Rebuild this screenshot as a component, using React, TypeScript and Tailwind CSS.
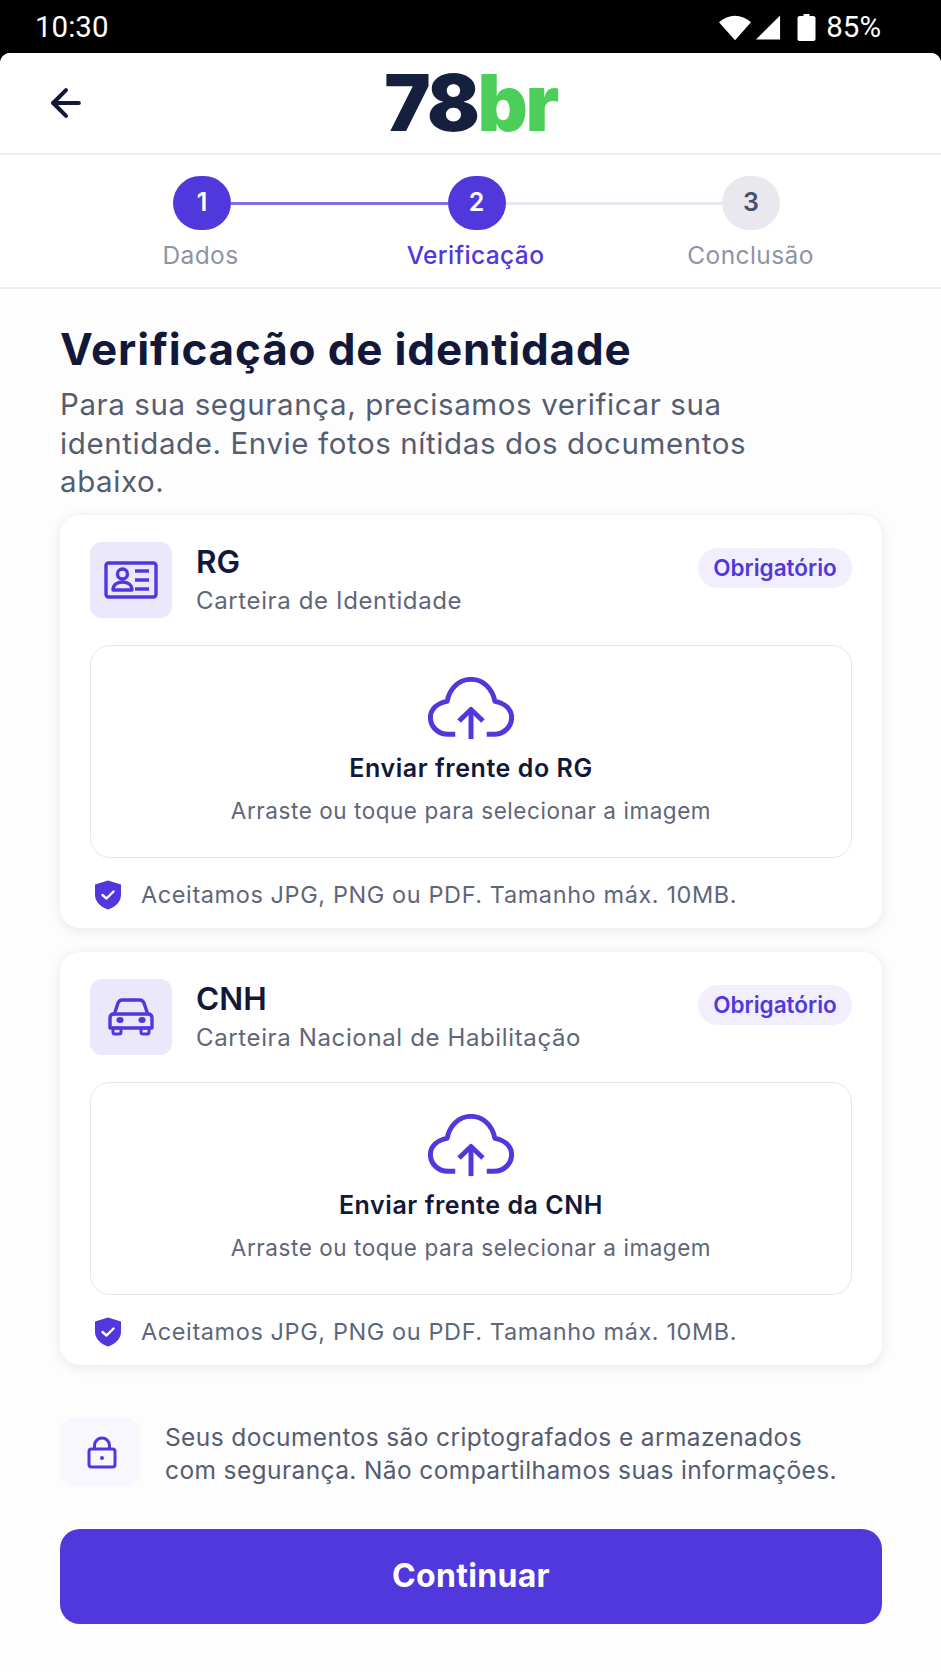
import React from 'react';
import { ArrowLeft } from 'lucide-react';

const CloudIcon = () => (
  <svg width="86" height="64" viewBox="0 0 90 67" fill="none" stroke="#5138dc" strokeWidth="5.2" strokeLinejoin="round">
    <path d="M28.5 60H21C10.5 60 2.5 52 2.5 42.5C2.5 33.5 10 27 20 25.5C22.5 12 32.5 2.5 45 2.5C57.5 2.5 67.5 12 70 25.5C80 27 87.5 33.5 87.5 42.5C87.5 52 79.5 60 69 60H61.5" />
    <path d="M45 65V35" />
    <path d="M32.5 46L45 34L57.5 46" />
  </svg>
);

const IdIcon = () => (
  <svg width="54" height="38" viewBox="0 0 54 38" fill="none" stroke="#5138dc" strokeWidth="3.4" strokeLinejoin="round">
    <rect x="2" y="2" width="50" height="34" rx="2.5" />
    <circle cx="18.5" cy="13" r="5" />
    <path d="M9 29C9 24 13 21 18.5 21C24 21 28 24 28 29Z" />
    <path d="M31 10H45M31 19H45M31 28H45" />
  </svg>
);

const CarIcon = () => (
  <svg width="46" height="38" viewBox="0 0 46 38" fill="none">
    <path d="M6 17L10 5C11 3 12 2 14 2H32C34 2 35 3 36 5L40 17" stroke="#5138dc" strokeWidth="3.4" strokeLinejoin="round" />
    <path d="M2 20C2 17 4 16 6 16H40C42 16 44 17 44 20V30H2Z" stroke="#5138dc" strokeWidth="3.4" strokeLinejoin="round" />
    <ellipse cx="12" cy="22" rx="3.6" ry="2.9" fill="#5138dc" />
    <ellipse cx="34" cy="22" rx="3.6" ry="2.9" fill="#5138dc" />
    <path d="M5 30H13V34C13 35.5 12 36 11 36H7C6 36 5 35.5 5 34ZM33 30H41V34C41 35.5 40 36 39 36H35C34 36 33 35.5 33 34Z" stroke="#5138dc" strokeWidth="3" strokeLinejoin="round" />
  </svg>
);

const ShieldIcon = () => (
  <svg width="28" height="30" viewBox="0 0 28 30">
    <path d="M14 0.5L27 4.5V15C27 22 21 27 14 29.5C7 27 1 22 1 15V4.5Z" fill="#5138dc" />
    <path d="M8.5 15L12.5 18.5L19.5 11.5" fill="none" stroke="#fff" strokeWidth="2.4" strokeLinecap="round" strokeLinejoin="round" />
  </svg>
);

const LockIcon = () => (
  <svg width="30" height="33" viewBox="0 0 30 33" fill="none" stroke="#5138dc" strokeWidth="3" strokeLinejoin="round" className="ml-[4px]">
    <rect x="2" y="13" width="26" height="18" rx="2.5" />
    <path d="M7.5 13V9.5C7.5 5 11 2 15 2C19 2 22.5 5 22.5 9.5V13" />
    <circle cx="15" cy="22" r="2" fill="#5138dc" stroke="none" />
  </svg>
);

type DocCardProps = {
  icon: React.ReactNode;
  title: string;
  subtitle: string;
  upload: string;
};

const DocCard = ({ icon, title, subtitle, upload }: DocCardProps) => (
  <div className="bg-white rounded-[20px] h-[413px] px-[30px] pt-[27px] shadow-[0_2px_12px_rgba(30,30,70,0.10)]">
    {/* header */}
    <div className="flex h-[76px]">
      <div className="w-[82px] h-[76px] rounded-[12px] bg-[#ebe8fb] flex items-center justify-center shrink-0">{icon}</div>
      <div className="ml-[24px] flex-1 flex flex-col">
        <p className="mt-[1px] text-[31.5px] leading-[38px] font-semibold text-[#11183a]">{title}</p>
        <p className="mt-[2px] text-[24px] leading-[36px] tracking-[0.63px] text-[#5f6679]">{subtitle}</p>
      </div>
      <div className="mt-[6px] h-[40px] w-[154px] rounded-full bg-[#f1eefd] text-[#5138dc] text-[22.5px] font-semibold flex items-center justify-center">
        Obrigatório
      </div>
    </div>
    {/* upload */}
    <div className="mt-[27px] h-[213px] rounded-[20px] border-[1.5px] border-[#e6e6ef] flex flex-col items-center pt-[31px]">
      <CloudIcon />
      <p className="mt-[11px] text-[25px] leading-[32px] tracking-[0.56px] font-semibold text-[#11183a]">{upload}</p>
      <p className="mt-[11px] text-[22.5px] leading-[32px] tracking-[0.55px] text-[#5f6679]">Arraste ou toque para selecionar a imagem</p>
    </div>
    {/* note */}
    <div className="mt-[21px] ml-[4px] flex items-center gap-[19px]">
      <ShieldIcon />
      <p className="text-[23.5px] leading-[32px] tracking-[0.59px] text-[#5f6679]">Aceitamos JPG, PNG ou PDF. Tamanho máx. 10MB.</p>
    </div>
  </div>
);

const Step = ({ n, active }: { n: number; active: boolean }) => (
  <div
    className={`w-[58px] h-[54px] rounded-full shrink-0 flex items-center justify-center text-[25px] font-semibold ${
      active ? 'bg-[#5138dc] text-white' : 'bg-[#e8e8ee] text-[#4b5068]'
    }`}
  >
    {n}
  </div>
);

export default function App() {
  return (
    <div className="w-[941px] h-[1672px] bg-black overflow-hidden font-['Inter',sans-serif]">
      {/* status bar */}
      <div className="h-[53px] pt-[2px] flex items-center justify-between pl-[35px] pr-[60px] text-white font-['Roboto',sans-serif] text-[29.5px]">
        <span>10:30</span>
        <div className="flex items-center">
          <svg width="32" height="26" viewBox="0 0 34 26" fill="#fff">
            <path d="M0 7C5 2.5 11 0 17 0C23 0 29 2.5 34 7L17 26Z" />
          </svg>
          <svg width="27" height="26" viewBox="0 0 28 26" fill="#fff" className="ml-[4px]">
            <path d="M26 0V25H1Z" />
          </svg>
          <svg width="19" height="27" viewBox="0 0 18 27" fill="#fff" className="ml-[15px]">
            <path d="M6 0H12V2H16C17 2 18 3 18 4V25C18 26 17 27 16 27H2C1 27 0 26 0 25V4C0 3 1 2 2 2H6Z" />
          </svg>
          <span className="ml-[10px]">85%</span>
        </div>
      </div>

      <div className="h-[1619px] bg-[#fdfdfe] rounded-t-[10px] overflow-hidden">
        {/* header */}
        <div className="h-[102px] bg-white border-b-2 border-[#efeff3] flex items-center">
          <ArrowLeft size={44} strokeWidth={2.2} className="ml-[44px] text-[#11183a]" />
          <div className="flex-1 flex justify-center -ml-[88px] text-[78px] leading-none font-black tracking-[-2.5px]">
            <span className="text-[#15203f]">78</span>
            <span className="text-[#4ccf58]">br</span>
          </div>
        </div>

        {/* stepper */}
        <div className="h-[134px] bg-white border-b-2 border-[#efeff3] pt-[21px]">
          <div className="flex items-center pl-[173px] pr-[161px]">
            <Step n={1} active />
            <div className="flex-1 h-[3px] bg-[#8270ea]" />
            <Step n={2} active />
            <div className="flex-1 h-[3px] bg-[#e6e6ee]" />
            <Step n={3} active={false} />
          </div>
          <div className="ml-[63px] mr-[53px] mt-[9px] grid grid-cols-3 text-center text-[24.5px] leading-[32px] tracking-[0.4px] text-[#8f93a6]">
            <span>Dados</span>
            <span className="text-[#5138dc] font-medium">Verificação</span>
            <span>Conclusão</span>
          </div>
        </div>

        {/* content */}
        <div className="pl-[60px] pr-[59px] pt-[35px]">
          <h1 className="text-[44px] leading-[50px] tracking-[0.85px] font-bold text-[#11183a]">Verificação de identidade</h1>
          <p className="mt-[11px] pr-[40px] text-[29.5px] leading-[38.5px] tracking-[0.6px] text-[#565c70]">
            Para sua segurança, precisamos verificar sua identidade. Envie fotos nítidas dos documentos abaixo.
          </p>
          <div className="mt-[14px] flex flex-col gap-[24px]">
            <DocCard icon={<IdIcon />} title="RG" subtitle="Carteira de Identidade" upload="Enviar frente do RG" />
            <DocCard icon={<CarIcon />} title="CNH" subtitle="Carteira Nacional de Habilitação" upload="Enviar frente da CNH" />
          </div>

          <div className="mt-[53px] flex items-center">
            <div className="w-[80px] h-[69px] rounded-[14px] bg-[#f8f7fe] flex items-center justify-center shrink-0">
              <LockIcon />
            </div>
            <p className="ml-[25px] pt-[3px] max-w-[684px] text-[24.5px] leading-[33px] tracking-[0.39px] text-[#565c70]">
              Seus documentos são criptografados e armazenados com segurança. Não compartilhamos suas informações.
            </p>
          </div>

          <button className="mt-[42px] w-full h-[95px] rounded-[20px] bg-[#5138dc] text-white text-[32px] tracking-[0.3px] font-bold">
            Continuar
          </button>
        </div>
      </div>
    </div>
  );
}
